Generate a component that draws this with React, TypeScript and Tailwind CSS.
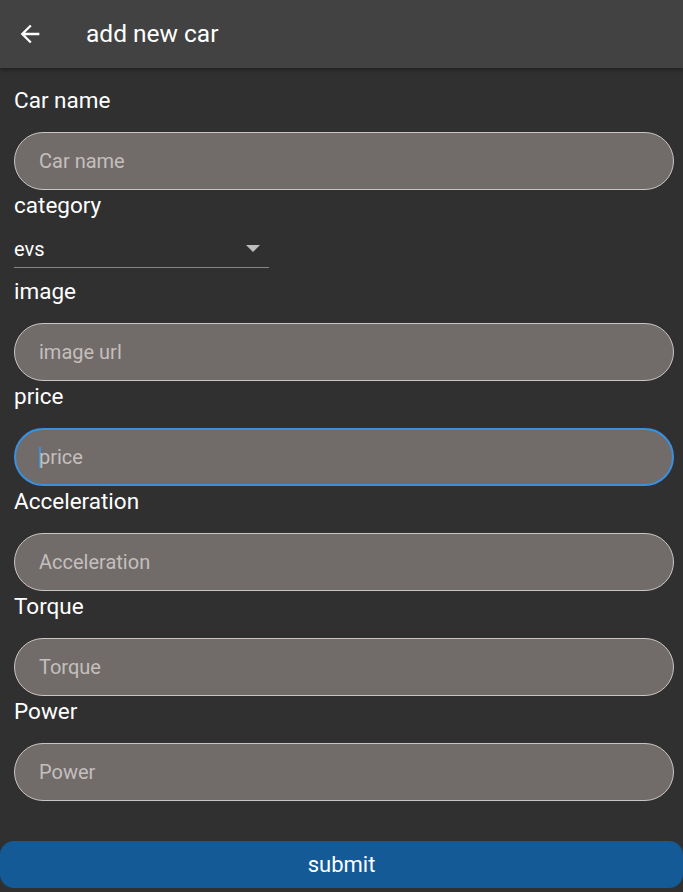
import React, { useState } from 'react';

const fields = [
    { label: 'Car name', placeholder: 'Car name' },
    { label: 'image', placeholder: 'image url' },
    { label: 'price', placeholder: 'price', focused: true },
    { label: 'Acceleration', placeholder: 'Acceleration' },
    { label: 'Torque', placeholder: 'Torque' },
    { label: 'Power', placeholder: 'Power' },
];

const Field = ({ label, placeholder, focused }: { label: string; placeholder: string; focused?: boolean }) => (
    <div>
        <div className="mb-[17px] text-[22.5px] leading-[30px] text-white">{label}</div>
        <div
            className={`flex h-[58px] items-center rounded-full bg-[#716c6a] ${
                focused ? 'border-2 border-[#3a8fe0] pl-[23px]' : 'border border-[#c9c5c3] pl-[24px]'
            }`}
        >
            {focused && <span className="mr-[-2px] h-[21px] w-[2px] bg-[#3a8fe0]" />}
            <span className="text-[20px] text-[#c4bfbd]">{placeholder}</span>
        </div>
    </div>
);

const App = () => {
    const [category] = useState('evs');

    return (
        <div className="min-h-[892px] bg-[#303030] font-['Roboto',sans-serif]">
            {/* App bar */}
            <div className="flex h-[68px] items-center bg-[#424242] shadow-[0_2px_4px_rgba(0,0,0,0.35)]">
                <div className="flex w-[86px] items-center pl-[16px]">
                    <svg width="28" height="28" viewBox="0 0 24 24" fill="#ffffff">
                        <path d="M20 11H7.83l5.59-5.59L12 4l-8 8 8 8 1.41-1.41L7.83 13H20v-2z" />
                    </svg>
                </div>
                <div className="text-[24.5px] text-white">add new car</div>
            </div>

            <div className="pl-[14px] pr-[9px] pt-[17px]">
                <Field {...fields[0]} />

                {/* category */}
                <div className="text-[22.5px] leading-[30px] text-white">category</div>
                <div className="mb-[8px] flex h-[48px] w-[255px] items-center justify-between border-b border-[#858585] pr-[9px] pt-[10px]">
                    <span className="text-[20px] text-white">{category}</span>
                    <svg width="14" height="7" viewBox="0 0 14 7">
                        <path d="M0 0h14L7 7z" fill="#bdbdbd" />
                    </svg>
                </div>

                {fields.slice(1).map((f) => (
                    <Field key={f.label} {...f} />
                ))}
            </div>

            <div className="mt-[40px]">
                <button type="button" className="flex h-[47px] w-full items-center justify-center rounded-[14px] bg-[#135a96] text-[22px] text-white">
                    submit
                </button>
            </div>
        </div>
    );
};

export default App;
